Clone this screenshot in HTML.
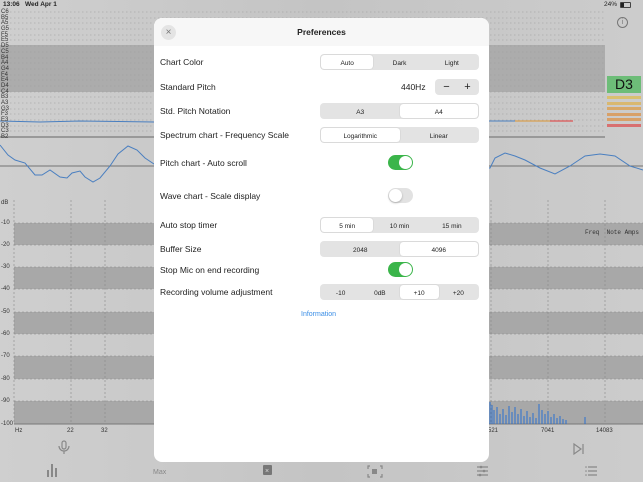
<!DOCTYPE html>
<html><head><meta charset="utf-8"><style>
*{margin:0;padding:0;box-sizing:border-box}
body{width:643px;height:482px;overflow:hidden;background:#c9c9c9;font-family:"Liberation Sans",sans-serif;position:relative}
.a{position:absolute}
.lbl{position:absolute;font-size:6px;color:#333;left:1px;line-height:6px}
.row{position:absolute;left:160px;font-size:8.5px;color:#222}
.seg{position:absolute;height:16px;background:#e3e3e3;border-radius:4px;display:flex;font-size:6.5px;color:#222;padding:1px}
.seg div{flex:1;display:flex;align-items:center;justify-content:center;height:14px;padding-top:3px}
.seg .on{background:#fff;border-radius:3px;box-shadow:0 0 1px rgba(0,0,0,.25)}
.tg{position:absolute;width:25px;height:15px;border-radius:8px;background:#3bb54a}
.tg::after{content:"";position:absolute;top:1px;right:1px;width:13px;height:13px;border-radius:50%;background:#fff}
.tg.off{background:#e2e2e2}
.tg.off::after{right:auto;left:1px;box-shadow:0 1px 2px rgba(0,0,0,.25)}
</style></head><body>
<div class="a" style="left:0;top:0;width:643px;height:482px;background:linear-gradient(90deg,#cfcfcf,#c4c4c4 50%,#cccccc)"></div>
<div class="a" style="left:3px;top:1px;font-size:6.5px;color:#222;font-weight:bold">13:06 &nbsp; Wed Apr 1</div>
<div class="a" style="left:604px;top:1px;font-size:6.5px;color:#222">24%</div>
<div class="a" style="left:620px;top:2px;width:11px;height:6px;border:1px solid #444;border-radius:1px"><div style="width:3px;height:4px;background:#222"></div></div>
<svg class="a" style="left:0;top:0" width="643" height="482">
<rect x="0" y="45" width="605" height="47" fill="#acacac"/>
<rect x="0" y="136" width="605" height="2" fill="#999"/>
<g stroke="#999" stroke-dasharray="1.5,2.5" stroke-width="0.6">
<line x1="10" y1="12" x2="605" y2="12"/><line x1="10" y1="18" x2="605" y2="18"/><line x1="10" y1="23" x2="605" y2="23"/><line x1="10" y1="29" x2="605" y2="29"/><line x1="10" y1="35" x2="605" y2="35"/><line x1="10" y1="40" x2="605" y2="40"/><line x1="10" y1="46" x2="605" y2="46"/><line x1="10" y1="52" x2="605" y2="52"/><line x1="10" y1="58" x2="605" y2="58"/><line x1="10" y1="63" x2="605" y2="63"/><line x1="10" y1="69" x2="605" y2="69"/><line x1="10" y1="75" x2="605" y2="75"/><line x1="10" y1="80" x2="605" y2="80"/><line x1="10" y1="86" x2="605" y2="86"/><line x1="10" y1="92" x2="605" y2="92"/><line x1="10" y1="97" x2="605" y2="97"/><line x1="10" y1="103" x2="605" y2="103"/><line x1="10" y1="109" x2="605" y2="109"/><line x1="10" y1="114" x2="605" y2="114"/><line x1="10" y1="120" x2="605" y2="120"/><line x1="10" y1="126" x2="605" y2="126"/><line x1="10" y1="131" x2="605" y2="131"/>
</g>
<polyline fill="none" stroke="#4a7fc0" stroke-width="1" points="0,121 40,122 80,121 154,122 490,121 515,121"/>
<line x1="515" y1="121" x2="550" y2="121" stroke="#d9a050" stroke-width="1.2"/>
<line x1="550" y1="121" x2="573" y2="121" stroke="#d55" stroke-width="1.2"/>
<line x1="0" y1="166" x2="643" y2="166" stroke="#555" stroke-width="0.8"/>
<polyline fill="none" stroke="#4a7fc0" stroke-width="1" points="0,145 8,155 15,160 25,163 35,175 42,175 50,170 60,177 67,178 72,173 80,171 85,177 93,182 100,178 110,166 118,154 128,146 137,150 145,158 154,164 490,168 495,158 505,153 515,156 525,160 540,168 555,174 570,166 585,156 600,154 615,156 630,166 643,170"/>
<g fill="#a8a8a8"><rect x="14" y="223" width="629" height="22"/><rect x="14" y="267" width="629" height="22"/><rect x="14" y="312" width="629" height="22"/><rect x="14" y="356" width="629" height="23"/><rect x="14" y="401" width="629" height="23"/></g>
<g stroke="#888" stroke-dasharray="2,2" stroke-width="0.6" fill="none">
<line x1="14" y1="200" x2="14" y2="424"/><line x1="71" y1="200" x2="71" y2="424"/><line x1="105" y1="200" x2="105" y2="424"/><line x1="491" y1="200" x2="491" y2="424"/><line x1="548" y1="200" x2="548" y2="424"/><line x1="605" y1="200" x2="605" y2="424"/>
<line x1="14" y1="223" x2="643" y2="223"/><line x1="14" y1="245" x2="643" y2="245"/><line x1="14" y1="267" x2="643" y2="267"/><line x1="14" y1="289" x2="643" y2="289"/><line x1="14" y1="312" x2="643" y2="312"/><line x1="14" y1="334" x2="643" y2="334"/><line x1="14" y1="356" x2="643" y2="356"/><line x1="14" y1="379" x2="643" y2="379"/><line x1="14" y1="401" x2="643" y2="401"/>
</g>
<line x1="14" y1="424" x2="643" y2="424" stroke="#777" stroke-width="1"/>
<g stroke="#2a6fd0" stroke-width="1">
<line x1="490" y1="424" x2="490" y2="402"/><line x1="492" y1="424" x2="492" y2="405"/><line x1="494" y1="424" x2="494" y2="410"/><line x1="497" y1="424" x2="497" y2="407"/><line x1="500" y1="424" x2="500" y2="414"/><line x1="503" y1="424" x2="503" y2="409"/><line x1="506" y1="424" x2="506" y2="415"/><line x1="509" y1="424" x2="509" y2="406"/><line x1="512" y1="424" x2="512" y2="412"/><line x1="515" y1="424" x2="515" y2="407"/><line x1="518" y1="424" x2="518" y2="414"/><line x1="521" y1="424" x2="521" y2="409"/><line x1="524" y1="424" x2="524" y2="416"/><line x1="527" y1="424" x2="527" y2="411"/><line x1="530" y1="424" x2="530" y2="417"/><line x1="533" y1="424" x2="533" y2="413"/><line x1="536" y1="424" x2="536" y2="418"/><line x1="539" y1="424" x2="539" y2="404"/><line x1="542" y1="424" x2="542" y2="410"/><line x1="545" y1="424" x2="545" y2="414"/><line x1="548" y1="424" x2="548" y2="411"/><line x1="551" y1="424" x2="551" y2="417"/><line x1="554" y1="424" x2="554" y2="414"/><line x1="557" y1="424" x2="557" y2="418"/><line x1="560" y1="424" x2="560" y2="416"/><line x1="563" y1="424" x2="563" y2="419"/><line x1="566" y1="424" x2="566" y2="420"/><line x1="585" y1="424" x2="585" y2="417"/>
</g>
</svg>
<div class="lbl" style="top:9px">C6</div><div class="lbl" style="top:15px">B5</div><div class="lbl" style="top:20px">A5</div><div class="lbl" style="top:26px">G5</div><div class="lbl" style="top:32px">F5</div><div class="lbl" style="top:37px">E5</div><div class="lbl" style="top:43px">D5</div><div class="lbl" style="top:49px">C5</div><div class="lbl" style="top:55px">B4</div><div class="lbl" style="top:60px">A4</div><div class="lbl" style="top:66px">G4</div><div class="lbl" style="top:72px">F4</div><div class="lbl" style="top:77px">E4</div><div class="lbl" style="top:83px">D4</div><div class="lbl" style="top:89px">C4</div><div class="lbl" style="top:94px">B3</div><div class="lbl" style="top:100px">A3</div><div class="lbl" style="top:106px">G3</div><div class="lbl" style="top:111px">F3</div><div class="lbl" style="top:117px">E3</div><div class="lbl" style="top:123px">D3</div><div class="lbl" style="top:128px">C3</div><div class="lbl" style="top:134px">B2</div>
<div class="lbl" style="top:200px">dB</div><div class="lbl" style="top:220px">-10</div><div class="lbl" style="top:242px">-20</div><div class="lbl" style="top:264px">-30</div><div class="lbl" style="top:286px">-40</div><div class="lbl" style="top:309px">-50</div><div class="lbl" style="top:331px">-60</div><div class="lbl" style="top:353px">-70</div><div class="lbl" style="top:376px">-80</div><div class="lbl" style="top:398px">-90</div><div class="lbl" style="top:421px">-100</div>
<div class="lbl" style="top:428px;left:15px">Hz</div><div class="lbl" style="top:428px;left:67px">22</div><div class="lbl" style="top:428px;left:101px">32</div><div class="lbl" style="top:428px;left:488px">521</div><div class="lbl" style="top:428px;left:541px">7041</div><div class="lbl" style="top:428px;left:596px">14083</div>
<div class="a" style="left:585px;top:229px;font-family:'Liberation Mono',monospace;font-size:6px;color:#333">Freq &nbsp;Note Amps</div>
<div class="a" style="left:617px;top:17px;width:11px;height:11px;border:1px solid #777;border-radius:50%;font-size:7px;color:#777;text-align:center;line-height:9px">i</div>
<div class="a" style="left:607px;top:76px;width:34px;height:17px;background:#6dbd78;font-size:14px;color:#111;text-align:center;line-height:17px">D3</div>
<div class="a" style="left:607px;top:96px;width:34px;height:3px;background:#d9c070"></div>
<div class="a" style="left:607px;top:102px;width:34px;height:3px;background:#d9b870"></div>
<div class="a" style="left:607px;top:107px;width:34px;height:3px;background:#d8a868"></div>
<div class="a" style="left:607px;top:113px;width:34px;height:3px;background:#d8a068"></div>
<div class="a" style="left:607px;top:118px;width:34px;height:3px;background:#d8a068"></div>
<div class="a" style="left:607px;top:124px;width:34px;height:3px;background:#d87070"></div>
<svg class="a" style="left:0;top:438px" width="643" height="44">
<g fill="none" stroke="#888" stroke-width="1.2">
<rect x="62" y="3" width="4" height="8" rx="2"/><path d="M59 8a5 5 0 0 0 10 0M64 13v3"/>
<path d="M574 6l7 5-7 5zM583 6v10"/>
<path d="M370 28h-2v3M380 28h2v3M370 39h-2v-3M380 39h2v-3"/>
<path d="M477 29h11M477 33h11M477 37h11"/>
<path d="M588 29h9M588 33h9M588 37h9"/>
</g>
<g fill="#888"><rect x="47" y="32" width="2" height="7"/><rect x="51" y="26" width="2" height="13"/><rect x="55" y="30" width="2" height="9"/><rect x="263" y="27" width="9" height="10" rx="1" fill="#777"/><rect x="372" y="31" width="5" height="5"/><circle cx="481" cy="29" r="1.3"/><circle cx="484" cy="33" r="1.3"/><circle cx="480" cy="37" r="1.3"/><circle cx="586" cy="29" r="0.8"/><circle cx="586" cy="33" r="0.8"/><circle cx="586" cy="37" r="0.8"/></g>
<text x="153" y="36" font-size="7" fill="#888" font-family="Liberation Sans">Max</text>
<text x="265" y="35" font-size="7" fill="#ddd" font-family="Liberation Sans">×</text>
</svg>
<div class="a" style="left:154px;top:18px;width:335px;height:444px;background:#fff;border-radius:8px;overflow:hidden">
<div style="height:28px;background:#f7f7f7;text-align:center;line-height:28px;font-size:8.5px;font-weight:bold;color:#222">Preferences</div>
<div class="a" style="left:7px;top:7px;width:15px;height:15px;border-radius:50%;background:#e4e4e4;text-align:center;line-height:15px;font-size:10px;color:#777">×</div>
</div>
<div class="row" style="top:57px">Chart Color</div>
<div class="seg" style="left:320px;top:54px;width:159px"><div class="on">Auto</div><div>Dark</div><div>Light</div></div>
<div class="row" style="top:82px">Standard Pitch</div>
<div class="a" style="left:401px;top:82px;font-size:8.5px;color:#222">440Hz</div>
<div class="seg" style="left:435px;top:79px;width:44px;font-size:11px"><div style="padding-top:0">−</div><div style="padding-top:0">+</div></div>
<div class="row" style="top:106px">Std. Pitch Notation</div>
<div class="seg" style="left:320px;top:103px;width:159px"><div>A3</div><div class="on">A4</div></div>
<div class="row" style="top:130px">Spectrum chart - Frequency Scale</div>
<div class="seg" style="left:320px;top:127px;width:159px"><div class="on">Logarithmic</div><div>Linear</div></div>
<div class="row" style="top:158px">Pitch chart - Auto scroll</div>
<div class="tg" style="left:388px;top:155px"></div>
<div class="row" style="top:191px">Wave chart - Scale display</div>
<div class="tg off" style="left:388px;top:188px"></div>
<div class="row" style="top:220px">Auto stop timer</div>
<div class="seg" style="left:320px;top:217px;width:159px"><div class="on">5 min</div><div>10 min</div><div>15 min</div></div>
<div class="row" style="top:244px">Buffer Size</div>
<div class="seg" style="left:320px;top:241px;width:159px"><div>2048</div><div class="on">4096</div></div>
<div class="row" style="top:265px">Stop Mic on end recording</div>
<div class="tg" style="left:388px;top:262px"></div>
<div class="row" style="top:287px">Recording volume adjustment</div>
<div class="seg" style="left:320px;top:284px;width:159px"><div>-10</div><div>0dB</div><div class="on">+10</div><div>+20</div></div>
<div class="a" style="left:301px;top:311px;font-size:7px;color:#3a8ee6">Information</div>
</body></html>
